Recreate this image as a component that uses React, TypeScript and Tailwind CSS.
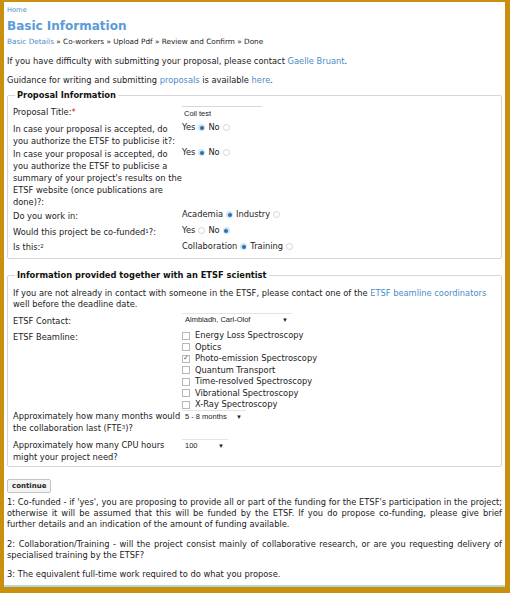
import React from 'react'

// Small radio glyph drawn with CSS
function Radio({ checked }: { checked?: boolean }) {
  return checked ? (
    <span className="inline-flex items-center justify-center w-[7px] h-[7px] rounded-full bg-[#cfe3f2] align-middle mx-[3px]">
      <span className="w-[4px] h-[4px] rounded-full bg-[#2a6fa8]" />
    </span>
  ) : (
    <span className="inline-block w-[7px] h-[7px] rounded-full border border-[#d4d4d4] bg-white align-middle mx-[3px]" />
  )
}

function Check({ checked }: { checked?: boolean }) {
  return (
    <span className="inline-flex items-center justify-center w-[8px] h-[8px] border border-[#b8b8b8] bg-white mr-[5px] text-[7px] leading-none text-[#2a5b9a]">
      {checked ? '✓' : ''}
    </span>
  )
}

function Select({ value, width }: { value: string; width: string }) {
  return (
    <div className={`flex items-center justify-between border-t border-[#e4e4e4] h-[13px] pl-[3px] pr-[4px] font-['Liberation_Sans',sans-serif] text-[7.5px] text-[#222] ${width}`}>
      <span>{value}</span>
      <span className="text-[6px]">▼</span>
    </div>
  )
}

function Sup({ n }: { n: string }) {
  return <span className="relative -top-[2px] text-[5.5px] leading-none">{n}</span>
}

function Row({
  label,
  children,
  className = '',
}: {
  label: React.ReactNode
  children?: React.ReactNode
  className?: string
}) {
  return (
    <div className={`flex ${className}`}>
      <div className="w-[169px] shrink-0 leading-[12px]">{label}</div>
      <div className="flex-1 leading-[12px]">{children}</div>
    </div>
  )
}

const beamlines = [
  'Energy Loss Spectroscopy',
  'Optics',
  'Photo-emission Spectroscopy',
  'Quantum Transport',
  'Time-resolved Spectroscopy',
  'Vibrational Spectroscopy',
  'X-Ray Spectroscopy',
]

export default function App() {
  return (
    <div className="w-[510px] h-[593px] bg-[#c8900e] pl-[4px] pt-[2px] pr-[5px] pb-[6px]">
      <div className="h-full bg-white border-b-[2px] border-[#b5d8d8] px-[3px] font-['DejaVu_Sans',sans-serif] text-[8.3px] text-[#222]">
        {/* Header */}
        <div className="pt-[3px] leading-[10px] text-[6.7px] text-[#4a8cc9]">Home</div>
        <h1 className="mt-[2px] leading-[18px] text-[12px] font-bold text-[#5b9bd6]">Basic Information</h1>
        <div className="mt-[2px] leading-[10px] text-[7.3px]">
          <span className="text-[#4a8cc9]">Basic Details</span> » Co-workers » Upload Pdf » Review and Confirm » Done
        </div>
        <p className="mt-[8px] leading-[12px]">
          If you have difficulty with submitting your proposal, please contact{' '}
          <span className="text-[#4a8cc9]">Gaelle Bruant</span>.
        </p>
        <p className="mt-[7px] leading-[12px]">
          Guidance for writing and submitting <span className="text-[#4a8cc9]">proposals</span> is available{' '}
          <span className="text-[#4a8cc9]">here</span>.
        </p>

        {/* Proposal Information */}
        <fieldset className="mt-[3px] border border-[#d6d6d6] rounded-[2px] pl-[5px] pr-[6px] pb-[5px]">
          <legend className="ml-[2px] px-[2px] font-bold leading-[12px] text-[#111]">Proposal Information</legend>
          <Row
            className="mt-[5px]"
            label={
              <>
                Proposal Title:<span className="text-[#d22]">*</span>
              </>
            }
          >
            <div className="w-[80px] h-[13px] border-t border-[#d8d8d8] pl-[2px] font-['Liberation_Sans',sans-serif] text-[7.5px] leading-[13px]">
              Coil test
            </div>
          </Row>
          <Row className="mt-[4px]" label="In case your proposal is accepted, do you authorize the ETSF to publicise it?:">
            <div className="-mt-[2px]">
              Yes<Radio checked />No<Radio />
            </div>
          </Row>
          <Row
            className="mt-[1px]"
            label="In case your proposal is accepted, do you authorize the ETSF to publicise a summary of your project's results on the ETSF website (once publications are done)?:"
          >
            <div className="-mt-[2px]">
              Yes<Radio checked />No<Radio />
            </div>
          </Row>
          <Row className="mt-[2px]" label="Do you work in:">
            <div className="-mt-[2px]">
              Academia<Radio checked />Industry<Radio />
            </div>
          </Row>
          <Row
            className="mt-[4px]"
            label={
              <>
                Would this project be co-funded<Sup n="1" />?:
              </>
            }
          >
            <div className="-mt-[2px]">
              Yes<Radio />No<Radio checked />
            </div>
          </Row>
          <Row
            className="mt-[3px]"
            label={
              <>
                Is this:<Sup n="2" />
              </>
            }
          >
            <div className="-mt-[1px]">
              Collaboration<Radio checked />Training<Radio />
            </div>
          </Row>
        </fieldset>

        {/* ETSF scientist */}
        <fieldset className="mt-[10px] border border-[#d6d6d6] rounded-[2px] pl-[5px] pr-[6px] pb-[3px]">
          <legend className="ml-[2px] px-[2px] font-bold leading-[12px] text-[#111]">
            Information provided together with an ETSF scientist
          </legend>
          <p className="mt-[7px] leading-[10.6px]">
            If you are not already in contact with someone in the ETSF, please contact one of the{' '}
            <span className="text-[#4a8cc9]">ETSF beamline coordinators</span> well before the deadline date.
          </p>
          <Row className="mt-[4px]" label={<div className="pt-[2px]">ETSF Contact:</div>}>
            <Select value="Almbladh, Carl-Olof" width="w-[110px]" />
          </Row>
          <Row className="mt-[3px]" label={<div className="pt-[1px]">ETSF Beamline:</div>}>
            <div className="flex flex-col">
              {beamlines.map((b, i) => (
                <div key={b} className="flex items-center h-[11.5px] leading-[11.5px]">
                  <Check checked={i === 2} />
                  <span>{b}</span>
                </div>
              ))}
            </div>
          </Row>
          <Row
            className="-mt-[1px]"
            label={
              <>
                Approximately how many months would the collaboration last (FTE<Sup n="3" />)?
              </>
            }
          >
            <Select value="5 - 8 months" width="w-[64px]" />
          </Row>
          <Row className="mt-[5px]" label="Approximately how many CPU hours might your project need?">
            <Select value="100" width="w-[46px]" />
          </Row>
        </fieldset>

        <button className="mt-[12px] block h-[14px] px-[4px] border border-[#c4c4c4] rounded-[2px] bg-[#f4f4f4] font-['DejaVu_Sans',sans-serif] text-[7px] font-bold leading-[12px] text-[#222]">
          continue
        </button>

        <div className="mt-[4px] text-justify">
          <p className="leading-[11.3px]">
            1: Co-funded - if 'yes', you are proposing to provide all or part of the funding for the ETSF's participation in the project; otherwise it will be assumed that this will be funded by the ETSF. If you do propose co-funding, please give brief further details and an indication of the amount of funding available.
          </p>
          <p className="mt-[8px] leading-[11.3px]">
            2: Collaboration/Training - will the project consist mainly of collaborative research, or are you requesting delivery of specialised training by the ETSF?
          </p>
          <p className="mt-[8px] leading-[11.3px]">3: The equivalent full-time work required to do what you propose.</p>
        </div>
      </div>
    </div>
  )
}
